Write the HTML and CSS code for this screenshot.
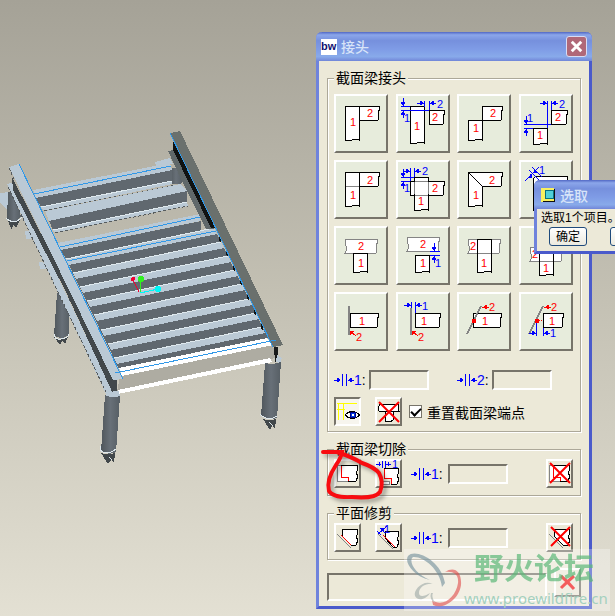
FILE: index.html
```
<!DOCTYPE html>
<html lang="zh-CN">

<head>
    <meta charset="UTF-8">
    <title>接头</title>
    <link rel="stylesheet" href="styles.css">
</head>

<body>
    <!-- shared arrow pieces -->
    <svg class="defs" aria-hidden="true">
        <defs>
            <g id="right"><path d="M-7 0H0M-2-1v2M-3-2v4M-4-2v4"/></g>
            <g id="left"><path d="M7 0H0M2-1v2M3-2v4M4-2v4"/></g>
            <g id="down"><path d="M0-8V0M-1-2h2M-2-3h4M-2-4h4"/></g>
            <g id="up"><path d="M0 8V0M-1 2h2M-2 3h4M-2 4h4"/></g>
            <g id="redarrow"><path d="M6 5L1 1M0 0h4M0 1h3M0 2h2M0 3h1"/></g>
            <g id="slat">
                <path class="light" d="M66 259L214 228L217 234L69 265Z"/>
                <path class="edge" d="M66 259L214 228"/>
            </g>
            <symbol id="gap" viewBox="0 0 20 14">
                <path class="blue" d="M0 7h6M3 5v4M4 5v4M5 6v2M8 1v12M12 1v12M14 7h6M15 6v2M16 5v4M17 5v4"/>
            </symbol>
        </defs>
    </svg>

    <main class="desktop">
        <svg class="model" viewBox="0 0 310 480" role="img" aria-label="模型">
            <defs>
                <linearGradient id="tube">
                    <stop offset="0" stop-color="#4f565b"/>
                    <stop offset="0.5" stop-color="#687078"/>
                    <stop offset="1" stop-color="#565e64"/>
                </linearGradient>
            </defs>
            <!-- rear legs -->
            <path fill="url(#tube)" d="M170 168H183L182 183Q176 186 169 183Z"/>
            <path class="light" d="M155 162L170 158L173 164L156 166ZM0 193L10 192V212L0 203Z"/>
            <path fill="url(#tube)" d="M8 192L14 194L21 217Q14 225 7 219Z"/>
            <path class="web" d="M7 219Q14 225 21 218L16 228L13 225L12 230Z"/>
            <path class="edge" d="M6 218Q14 226 22 217"/>
            <path fill="url(#tube)" d="M57 293L70 300L69 335Q61 341 54 335Z"/>
            <path class="web" d="M54 337Q61 341 68 337L65 344L62 341L60 345Z"/>
            <path class="edge" d="M54 334Q54 340 61 339T69 334"/>
            <!-- loose beams -->
            <path class="light" d="M33 190L170 163L172 170L36 198Z"/>
            <path class="dark" d="M36 198L172 170V181L41 207Z"/>
            <path class="light" d="M41 207L172 181V184L44 211Z"/>
            <path class="edge" d="M41 207L172 181"/>
            <path class="dash" d="M44 211L175 185"/>
            <path class="light" d="M45 211L180 184L187 191L49 221Z"/>
            <path class="dark" d="M49 221L187 191V202L53 230Z"/>
            <path class="light" d="M53 230L187 202L188 206L55 233Z"/>
            <path class="edge" d="M53 230L187 202"/>
            <path class="dash" d="M55 233L188 206"/>
            <path class="light" d="M58 243L200 214V221L61 250Z"/>
            <path class="dark" d="M61 250L201 221V232L66 259Z"/>
            <path class="pick" d="M34 194L171 166M60 247L200 217"/>
            <!-- deck -->
            <path class="dark" d="M66 259L214 228L268 338L119 369Z"/>
            <use href="#slat"/>
            <use href="#slat" x="7" y="14"/>
            <use href="#slat" x="14" y="28"/>
            <use href="#slat" x="21" y="42"/>
            <use href="#slat" x="28" y="56"/>
            <use href="#slat" x="35" y="71"/>
            <use href="#slat" x="42" y="85"/>
            <use href="#slat" x="48" y="99"/>
            <path class="pick" d="M67 261L216 231"/>
            <!-- front beam -->
            <path fill="#aeaca2" d="M120 376L273 345L275 358L117 392Z"/>
            <path fill="#fff" d="M119 368L267 338L273 345L122 376ZM118 390L270 358L272 362L118 394Z"/>
            <!-- right rail -->
            <path fill="#60686a" d="M168 151L174 150L214 229H206L182 181Z"/>
            <path fill="#101212" d="M173 141L216 228L211 228L173 150ZM219 236l2 2v5l-2-2zM226 250l2 2v5l-2-2zM233 265l2 2v5l-2-2zM240 279l2 2v5l-2-2zM247 294l2 2v5l-2-2zM254 309l2 2v5l-2-2zM261 324l2 2v5l-2-2z"/>
            <path fill="#6a706d" d="M170 133L180 131L283 345L273 347Z"/>
            <path class="pick" d="M170 133L273 347"/>
            <path fill="#181a1a" d="M274 347h4v15h-3z"/>
            <path class="light" d="M277 355l5 3-2 5-4-1z"/>
            <!-- left rail -->
            <path class="light" d="M7 184L13 182L64 290L115 396L107 396L57 290Z"/>
            <path class="light" d="M25 231h4l4 5-2 3h-5zM39 262h4l4 5-2 2h-5z"/>
            <path class="web" d="M12 177L70 290L114 380L117 380V396H114L65 290L13 190Z"/>
            <path class="light" d="M9 167L19 164L123 379L113 380Z"/>
            <path class="dash" d="M9 168L14 179M8 187L57 290L106 392"/>
            <path class="pick" d="M19 164L123 379M115 373L276 340"/>
            <!-- front legs -->
            <path class="light" d="M106 392L119 391L120 396L112 398L106 396Z"/>
            <path fill="url(#tube)" d="M105 395Q112 399 120 396L116 452Q108 456 101 451Z"/>
            <path class="web" d="M101 453Q108 456 115 453L114 463L111 460L108 464Z"/>
            <path class="edge" d="M100 446V450Q107 456 116 449M109 457l3 3"/>
            <path fill="url(#tube)" d="M265 363Q273 365 281 362L277 418Q268 421 261 416Z"/>
            <path class="web" d="M263 419Q270 421 276 419L275 429L272 426L270 430Z"/>
            <path class="edge" d="M260 414Q268 422 277 416M269 422l4 4"/>
            <!-- axes -->
            <path stroke="#f00030" d="M139 292L133 280"/>
            <path stroke="#30f020" d="M140 293L141 280"/>
            <path stroke="#00f8f8" d="M140 293L158 289"/>
            <circle cx="133" cy="279" r="2" fill="#f00030"/>
            <circle cx="141" cy="279" r="3" fill="#30f020"/>
            <circle cx="158" cy="289" r="3" fill="#00f8f8"/>
        </svg>

        <section class="window joint">
            <header class="titlebar">
                <span class="logo">bw</span>
                <h1>接头</h1>
                <button class="close" type="button" aria-label="关闭">
                    <svg viewBox="0 0 20 20"><path d="M5 5L15 15M15 5L5 15"/></svg>
                </button>
            </header>

            <form class="joint-body">
                <fieldset>
                    <legend>截面梁接头</legend>
                    <div class="joint-grid">
                        <button type="button" aria-label="接头 1"><svg viewBox="0 0 54 59">
                            <path class="beam" d="M25 12h20l1 3-2 3 1 4-1 4h-19z"/>
                            <path class="beam" d="M11 12h14v34l-3-1h-3l-2 2-3-1-3 1z"/>
                            <text x="33" y="23">2</text><text x="16" y="32">1</text>
                        </svg></button>
                        <button type="button" aria-label="接头 2"><svg viewBox="0 0 54 59">
                            <path class="beam" d="M33 16h15l1 3-2 3 1 4-1 4h-14z"/>
                            <path class="beam" d="M14 12h14v37l-3-1h-3l-2 2-3-1-3 1z"/>
                            <g class="blue"><path d="M5 12h9M5 16h28M28 7v6M33 7v9"/>
                                <use href="#right" x="28" y="9"/><use href="#left" x="33" y="9"/>
                                <use href="#down" x="7" y="12"/><use href="#up" x="7" y="16"/></g>
                            <text class="mark" x="41" y="14">2</text><text class="mark" x="8" y="28">1</text>
                            <text x="36" y="27">2</text><text x="18" y="36">1</text>
                        </svg></button>
                        <button type="button" aria-label="接头 3"><svg viewBox="0 0 54 59">
                            <path class="beam" d="M25 12h20l1 3-2 3 1 4-1 4h-19z"/>
                            <path class="beam" d="M11 26h14v20l-3-1h-3l-2 2-3-1-3 1z"/>
                            <text x="33" y="23">2</text><text x="16" y="38">1</text>
                        </svg></button>
                        <button type="button" aria-label="接头 4"><svg viewBox="0 0 54 59">
                            <path class="beam" d="M32 16h16l1 3-2 3 1 4-1 4h-15z"/>
                            <path class="beam" d="M14 34h14v16l-3-1h-3l-2 2-3-1-3 1z"/>
                            <g class="blue"><path d="M5 30h27M5 34h9M28 7v27M32 7v9"/>
                                <use href="#right" x="28" y="9"/><use href="#left" x="32" y="9"/>
                                <use href="#down" x="7" y="30"/><use href="#up" x="7" y="34"/></g>
                            <text class="mark" x="40" y="14">2</text><text class="mark" x="8" y="28">1</text>
                            <text x="36" y="27">2</text><text x="18" y="45">1</text>
                        </svg></button>

                        <button type="button" aria-label="接头 5"><svg viewBox="0 0 54 59">
                            <path class="beam" d="M25 12h20l1 3-2 3 1 4-1 4h-19z"/>
                            <path class="beam" d="M11 12h14v34l-3-1h-3l-2 2-3-1-3 1z"/>
                            <path class="gray" d="M12 26h13"/>
                            <text x="33" y="24">2</text><text x="16" y="39">1</text>
                        </svg></button>
                        <button type="button" aria-label="接头 6"><svg viewBox="0 0 54 59">
                            <path class="beam" d="M14 21h34l1 3-2 3 1 4-1 4h-33z"/>
                            <path class="beam" d="M18 17h14v33l-3-1h-3l-2 2-3-1-3 1z"/>
                            <path class="gray" d="M18 22v12M32 22v12M19 21h13M19 35h13"/>
                            <g class="blue"><path d="M5 17h13M5 21h9M14 8v13M18 8v9"/>
                                <use href="#right" x="14" y="11"/><use href="#left" x="18" y="11"/>
                                <use href="#down" x="7" y="17"/><use href="#up" x="7" y="21"/></g>
                            <text class="mark" x="26" y="15">2</text><text class="mark" x="8" y="32">1</text>
                            <text x="36" y="32">2</text><text x="22" y="45">1</text>
                        </svg></button>
                        <button type="button" aria-label="接头 7"><svg viewBox="0 0 54 59">
                            <path class="beam" d="M11 12h34l1 3-2 3 1 4-1 4H25v20l-3-1h-3l-2 2-3-1-3 1z"/>
                            <path class="line" d="M11 12L25 26"/>
                            <text x="32" y="24">2</text><text x="16" y="39">1</text>
                        </svg></button>
                        <button type="button" aria-label="接头 8"><svg viewBox="0 0 54 59">
                            <path class="beam" d="M17 16h31l1 3-2 3 1 4-1 4H28v20l-3-1h-3l-2 2-3-1-3 1V19z"/>
                            <g class="blue"><path d="M10 10l10 10M13 7l10 10M6 21L20 7"/>
                                <path d="M9 17h4M10 16h3M11 15h2M11 18v-4M15 12h4M15 11h3M15 13v-3"/></g>
                            <text class="mark" x="20" y="14">1</text>
                            <text x="36" y="28">2</text><text x="18" y="41">1</text>
                        </svg></button>

                        <button type="button" aria-label="接头 9"><svg viewBox="0 0 54 59">
                            <path class="beam gray" d="M11 13h32l1 3-2 3 1 4-1 4h-31l2-4-1-3-1-3z"/>
                            <path class="beam" d="M19 27h14v19l-3-1h-3l-2 2-3-1-3 1z"/>
                            <text x="24" y="24">2</text><text x="24" y="41">1</text>
                        </svg></button>
                        <button type="button" aria-label="接头 10"><svg viewBox="0 0 54 59">
                            <path class="beam gray" d="M11 11h32l1 3-2 3 1 4-1 4h-31l2-4-1-3-1-3z"/>
                            <path class="beam" d="M19 29h14v17l-3-1h-3l-2 2-3-1-3 1z"/>
                            <g class="blue"><path d="M34 25h10M34 29h10"/>
                                <use href="#down" x="38" y="25"/><use href="#up" x="38" y="29"/></g>
                            <text class="mark" x="39" y="41">1</text>
                            <text x="24" y="22">2</text><text x="24" y="41">1</text>
                        </svg></button>
                        <button type="button" aria-label="接头 11"><svg viewBox="0 0 54 59">
                            <path class="beam gray" d="M11 13h32l1 3-2 3 1 4-1 4h-31l2-4-1-3-1-3z"/>
                            <path class="beam" d="M20 13h14v33l-3-1h-3l-2 2-3-1-3 1z"/>
                            <path class="gray" d="M21 27h13"/>
                            <text x="13" y="24">2</text><text x="24" y="41">1</text>
                        </svg></button>
                        <button type="button" aria-label="接头 12"><svg viewBox="0 0 54 59">
                            <path class="beam gray" d="M11 21h32l1 3-2 3 1 4-1 4h-31l2-4-1-3-1-3z"/>
                            <path class="beam" d="M20 17h14v32l-3-1h-3l-2 2-3-1-3 1z"/>
                            <path class="gray" d="M21 35h13"/>
                            <text x="13" y="32">2</text><text x="24" y="46">1</text>
                        </svg></button>

                        <button type="button" aria-label="接头 13"><svg viewBox="0 0 54 59">
                            <path class="beam" d="M16 21h28l1 3-2 3 1 4-1 4h-27z"/>
                            <path class="plane" d="M15 14v29"/>
                            <g class="red"><use href="#redarrow" x="16" y="39"/></g>
                            <text x="25" y="33">1</text><text x="22" y="49">2</text>
                        </svg></button>
                        <button type="button" aria-label="接头 14"><svg viewBox="0 0 54 59">
                            <path class="beam" d="M19 21h25l1 3-2 3 1 4-1 4h-24z"/>
                            <path class="plane" d="M15 16v27"/>
                            <g class="blue"><path d="M15 10v6M19 10v11"/>
                                <use href="#right" x="15" y="13"/><use href="#left" x="19" y="13"/></g>
                            <g class="red"><use href="#redarrow" x="16" y="39"/></g>
                            <text class="mark" x="26" y="18">1</text>
                            <text x="25" y="33">1</text><text x="22" y="49">2</text>
                        </svg></button>
                        <button type="button" aria-label="接头 15"><svg viewBox="0 0 54 59">
                            <path class="beam" d="M16 21h28l1 3-2 3 1 4-1 4h-27z"/>
                            <path class="plane" d="M24 14L10 42"/>
                            <g class="red"><path class="dot" d="M15 27h3v3h-3z"/><use href="#left" x="25" y="15"/></g>
                            <text x="25" y="33">1</text><text x="32" y="19">2</text>
                        </svg></button>
                        <button type="button" aria-label="接头 16"><svg viewBox="0 0 54 59">
                            <path class="beam" d="M24 21h20l1 3-2 3 1 4-1 4h-19z"/>
                            <path class="plane" d="M24 14L10 42"/>
                            <g class="blue"><path d="M17 30v14M24 36v8"/>
                                <use href="#right" x="17" y="41"/><use href="#left" x="24" y="41"/></g>
                            <g class="red"><path class="dot" d="M16 27h3v3h-3z"/><path d="M20 28h1M22 28h1"/><use href="#left" x="25" y="15"/></g>
                            <text class="mark" x="31" y="45">1</text>
                            <text x="30" y="33">1</text><text x="32" y="19">2</text>
                        </svg></button>
                    </div>

                    <div class="offsets">
                        <label for="offset1"><svg class="gap" viewBox="0 0 20 14"><use href="#gap"/></svg><b>1</b>:</label>
                        <input type="text" id="offset1" class="field">
                        <label class="second" for="offset2"><svg class="gap" viewBox="0 0 20 14"><use href="#gap"/></svg><b>2</b>:</label>
                        <input type="text" id="offset2" class="field">
                    </div>

                    <div class="tools">
                        <button class="tool pressed" type="button" aria-label="预览"><svg viewBox="0 0 27 29">
                            <path class="yellow" d="M3 6h20M3 12h8M4 6v17M9 6v17"/>
                            <path fill="#fff" stroke="#000" d="M11 18Q18 11 26 18Q18 25 11 18Z"/>
                            <circle cx="19" cy="18" r="3" fill="#0038e0" stroke="#000080"/>
                            <path fill="#fff" d="M18 17h2v2h-2z"/>
                        </svg></button>
                        <button class="tool" type="button" aria-label="删除接头"><svg viewBox="0 0 27 29">
                            <path class="beam" d="M4 7h20l-1 3 1 4H4l-1-3 1-2z"/>
                            <path class="beam" d="M10 14h8v9l-3 2-2-1-3 1z"/>
                            <path class="cross" d="M4 5L24 25M24 5L4 25"/>
                        </svg></button>
                        <input type="checkbox" id="reset" checked>
                        <label for="reset">重置截面梁端点</label>
                    </div>
                </fieldset>

                <fieldset class="row">
                    <legend>截面梁切除</legend>
                    <button class="tool" type="button" aria-label="切除"><svg viewBox="0 0 27 29">
                        <path class="beam gray" d="M3 6h4v12h7v4H3z"/>
                        <path class="beam" d="M7 6h16l1 4-2 4 2 3-2 5h-8v-4H7z"/>
                        <path class="red" d="M7 7v11h7v4"/>
                    </svg></button>
                    <button class="tool" type="button" aria-label="偏移切除"><svg viewBox="0 0 27 29">
                        <path class="beam gray" d="M7 22h7v3H7z"/>
                        <path class="beam" d="M9 9h14l1 4-2 4 2 3-2 5h-6v-6H9z"/>
                        <path class="red" d="M9 10v9h7v6"/>
                        <path class="blue" d="M1 5h5M4 3v4M7 2v7M10 2v7M11 5h5M13 3v4"/>
                        <text class="mark" x="17" y="9">1</text>
                    </svg></button>
                    <label for="offset3"><svg class="gap" viewBox="0 0 20 14"><use href="#gap"/></svg><b>1</b>:</label>
                    <input type="text" id="offset3" class="field">
                    <button class="tool last" type="button" aria-label="删除切除"><svg viewBox="0 0 27 29">
                        <path class="beam gray" d="M3 6h4v12h7v4H3z"/>
                        <path class="beam" d="M7 6h16l1 4-2 4 2 3-2 5h-8v-4H7z"/>
                        <path class="red" d="M7 7v11h7v4"/>
                        <path class="cross" d="M4 4L24 24M24 4L4 24"/>
                    </svg></button>
                </fieldset>

                <fieldset class="row">
                    <legend>平面修剪</legend>
                    <button class="tool" type="button" aria-label="修剪"><svg viewBox="0 0 27 29">
                        <path class="beam" d="M8 6h15l1 4-2 4 2 3-2 5h-5L8 13z"/>
                        <path class="red" d="M7 12l10 10"/>
                        <path class="gray" d="M3 11l14 14"/>
                    </svg></button>
                    <button class="tool" type="button" aria-label="偏移修剪"><svg viewBox="0 0 27 29">
                        <path class="beam" d="M10 8h13l1 4-2 4 2 3-2 5h-4L10 15z"/>
                        <path class="red" d="M8 12l12 12"/>
                        <path class="gray" d="M3 11l15 15"/>
                        <path class="blue" d="M2 8l4 4M6 6l4 4M3 11l9-8M5 5h3v3"/>
                        <text class="mark" x="9" y="10">1</text>
                    </svg></button>
                    <label for="offset4"><svg class="gap" viewBox="0 0 20 14"><use href="#gap"/></svg><b>1</b>:</label>
                    <input type="text" id="offset4" class="field">
                    <button class="tool last" type="button" aria-label="删除修剪"><svg viewBox="0 0 27 29">
                        <path class="beam" d="M8 6h15l1 4-2 4 2 3-2 5h-5L8 13z"/>
                        <path class="gray" d="M3 11l14 14"/>
                        <path class="cross" d="M5 4L24 23M24 4L5 23"/>
                    </svg></button>
                </fieldset>

                <footer class="status">
                    <output></output>
                    <button class="tool" type="button" aria-label="取消"><svg viewBox="0 0 27 29">
                        <path class="cancel" d="M7 8Q13 13 20 21M20 8Q14 13 7 20"/>
                    </svg></button>
                </footer>
            </form>
        </section>

        <section class="window select">
            <header class="titlebar">
                <svg class="select-icon" viewBox="0 0 15 15">
                    <path fill="#f8f060" d="M0 0h13v14H0z"/>
                    <path fill="#101010" d="M2 13h11V1h1v13H2z"/>
                    <path fill="#50d0d8" stroke="#087080" d="M4 2h8v8H4z"/>
                </svg>
                <h2>选取</h2>
            </header>
            <div class="select-body">
                <p>选取1个项目。</p>
                <div class="choices">
                    <button type="button">确定</button>
                    <button type="button" aria-label="取消"></button>
                </div>
            </div>
        </section>

        <!-- hand drawn ring -->
        <svg class="ring" viewBox="0 0 64 56" aria-hidden="true">
            <path d="M3 6L22 6Q21 12 16 19Q6 34 9 45Q13 52 32 51Q55 53 60 46Q64 36 59 27Q54 21 42 17Q32 11 17 6"/>
        </svg>

        <div class="watermark">
            <svg viewBox="0 0 60 62" aria-hidden="true">
                <path fill="#6f8d9a" d="M26 31C9 27 0 13 4 7C11-1 37 11 41 34L38 38C36 20 19 7 9 8C4 12 11 25 26 31Z"/>
                <path fill="#e04a48" d="M41 23C50 17 58 22 57 36C55 51 39 61 29 56L28 51C39 59 52 48 54 34C55 25 49 22 41 23Z"/>
                <path fill="#9da9a6" d="M29 35C19 30 9 41 11 47C14 53 23 50 26 44C20 48 15 48 15 44C15 38 22 34 29 35ZM27 44Q25 50 31 54Q27 47 29 44Z"/>
            </svg>
            <div>
                <strong>野火论坛</strong>
                <span>www.proewildfire.cn</span>
            </div>
        </div>
    </main>
</body>

</html>
```
FILE: styles.css
```
* {
    box-sizing: border-box;
}

body {
    margin: 0;
    overflow: hidden;
    font-family: "Liberation Sans", "Noto Sans CJK SC", sans-serif;
    font-size: 14px;
    color: #000;
}

h1, h2, p {
    margin: 0;
}

button {
    padding: 0;
    font: inherit;
}

svg {
    display: block;
    shape-rendering: crispEdges;
}

.defs {
    position: absolute;
    width: 0;
    height: 0;
}

.desktop {
    position: relative;
    min-height: 100vh;
    overflow: hidden;
    background: linear-gradient(#a5a297, #c4c1b4 49%, #e3e0d3);
}

/* 3D model */
.model {
    position: absolute;
    top: 0;
    left: 0;
    width: 310px;
}

.light { fill: #bac9d5; }
.dark { fill: #60686f; }
.web { fill: #42484b; }
.edge { fill: none; stroke: #dfe9ee; }
.pick { fill: none; stroke: #3098e8; }
.dash { fill: none; stroke: #555b5e; stroke-dasharray: 3 2; }

/* windows */
.window {
    position: absolute;
    border: 3px solid #6f83dc;
    border-top: 0;
    border-right-color: #4a5acb;
    border-bottom-color: #4a5acb;
    border-radius: 6px 6px 0 0;
    background: #ece9d8;
}

.titlebar {
    display: flex;
    align-items: center;
    height: 29px;
    margin: 0 -3px;
    padding: 0 5px;
    border-radius: 6px 6px 0 0;
    background: linear-gradient(#5268c4, #8ba6ea 10%, #7690dd 30%, #7f9ce6 60%, #88aaea 85%, #7186d8);
    color: #d8e4f8;
}

.titlebar h1,
.titlebar h2 {
    font-size: 14px;
    line-height: 20px;
    font-weight: 500;
}

.joint {
    top: 32px;
    left: 316px;
    width: 276px;
}

.logo {
    width: 16px;
    height: 16px;
    margin-right: 4px;
    background: #fff;
    color: #101070;
    font-size: 11px;
    font-weight: bold;
    line-height: 14px;
    overflow: hidden;
}

.close {
    width: 21px;
    height: 21px;
    margin-left: auto;
    border: 1px solid #d8dcf4;
    border-radius: 3px;
    background: #b06878;
}

.close path {
    stroke: #fff;
    stroke-width: 3;
    shape-rendering: auto;
}

.joint-body {
    padding: 8px 8px 5px;
}

fieldset {
    min-width: 0;
    margin: 0 0 8px;
    padding: 7px 7px 5px 6px;
    border: 1px solid #aca899;
    box-shadow: 1px 1px #fff, inset 1px 1px #fff;
}

legend {
    padding: 0 2px;
    line-height: 18px;
    background: #ece9d8;
}

.joint-grid {
    display: grid;
    grid-template-columns: repeat(4, 54px);
    justify-content: space-between;
    row-gap: 7px;
}

.joint-grid button,
.tool {
    border: 2px solid;
    border-color: #fff #77746a #77746a #fff;
    background: #e7ecdc;
}

.joint-grid button {
    height: 59px;
}

.joint-grid svg {
    width: 54px;
    height: 59px;
    margin: -2px;
}

.tool {
    flex: none;
    width: 27px;
    height: 29px;
    background: #ece9d8;
}

.tool svg {
    width: 27px;
    height: 29px;
    margin: -2px;
}

.pressed {
    border-color: #77746a #fff #fff #77746a;
    background: #f7f5ee;
}

/* icon strokes */
.beam { fill: #fff; stroke: #000; }
.line { stroke: #000; }
.gray { stroke: #848484; }
path.gray:not(.beam) { fill: none; }
.plane { fill: none; stroke: #848484; stroke-width: 2; }
.blue { fill: none; stroke: #00f; }
.red { fill: none; stroke: #f00; }
.dot { fill: #f00; }
.yellow { fill: none; stroke: #ff0; }
.cross { fill: none; stroke: #f00; stroke-width: 2; shape-rendering: auto; }
.cancel { fill: none; stroke: #f01818; stroke-width: 3; shape-rendering: auto; }

button text {
    fill: #f00;
    font-size: 11px;
}

button text.mark {
    fill: #00f;
}

.offsets,
.tools,
.row,
.status {
    display: flex;
    align-items: center;
}

.offsets {
    margin-top: 19px;
}

.offsets label,
.row label {
    display: flex;
    align-items: center;
    width: 35px;
}

.offsets .second {
    margin-left: 28px;
}

.gap {
    width: 20px;
    height: 14px;
}

label b {
    color: #00f;
    font-weight: normal;
}

.field {
    width: 60px;
    height: 20px;
    padding: 0 2px;
    border: 2px solid;
    border-color: #77746a #fff #fff #77746a;
    background: #ece9d8;
}

.tools {
    gap: 14px;
    margin-top: 7px;
}

.tools input {
    appearance: none;
    width: 13px;
    height: 13px;
    margin: 0 -9px 0 -7px;
    border: 1px solid #77746a;
    background: #fff;
}

.tools input:checked::before {
    content: "";
    display: block;
    width: 8px;
    height: 4px;
    margin: 2px 1px;
    border: solid #000;
    border-width: 0 0 2px 2px;
    transform: rotate(-45deg);
}

.row {
    gap: 14px;
    padding: 1px 7px 7px 6px;
}

.row label {
    margin-left: -5px;
    margin-right: -12px;
}

.row .last {
    margin-left: auto;
}

.status {
    align-items: flex-start;
    gap: 7px;
}

.status output {
    flex: 1;
    height: 28px;
    margin-top: 5px;
    border: 2px solid;
    border-color: #77746a #fff #fff #77746a;
}

/* selection prompt */
.select {
    top: 180px;
    left: 534px;
    width: 150px;
}

.select .titlebar {
    padding: 2px 7px 0;
}

.select-icon {
    width: 15px;
    height: 15px;
    margin-right: 4px;
}

.select-body {
    padding: 0 4px 5px;
}

.select p {
    font-size: 12px;
    line-height: 18px;
}

.choices {
    display: flex;
    gap: 23px;
    padding-left: 8px;
}

.choices button {
    width: 38px;
    height: 19px;
    border: 1px solid #1f4a7c;
    border-radius: 3px;
    background: linear-gradient(#fff, #eceadf);
    font-size: 12px;
    line-height: 16px;
}

.ring {
    position: absolute;
    top: 446px;
    left: 320px;
    width: 64px;
    height: 56px;
    overflow: visible;
    filter: drop-shadow(3px 3px 2px rgba(0, 0, 0, 0.35));
    pointer-events: none;
}

.ring path {
    fill: none;
    stroke: #f80c10;
    stroke-width: 4;
    stroke-linecap: round;
    shape-rendering: auto;
}

.watermark {
    position: absolute;
    right: 5px;
    bottom: 5px;
    display: flex;
    width: 206px;
    height: 62px;
    background: rgba(255, 255, 255, 0.3);
    pointer-events: none;
}

.watermark svg {
    width: 60px;
    height: 62px;
    opacity: 0.6;
    shape-rendering: auto;
}

.watermark strong {
    display: block;
    padding-left: 10px;
    color: #5cb878;
    font-size: 30px;
    line-height: 40px;
    opacity: 0.7;
}

.watermark span {
    display: block;
    color: #a4d0be;
    font-family: "Noto Sans", sans-serif;
    font-size: 15px;
    line-height: 18px;
}
```
